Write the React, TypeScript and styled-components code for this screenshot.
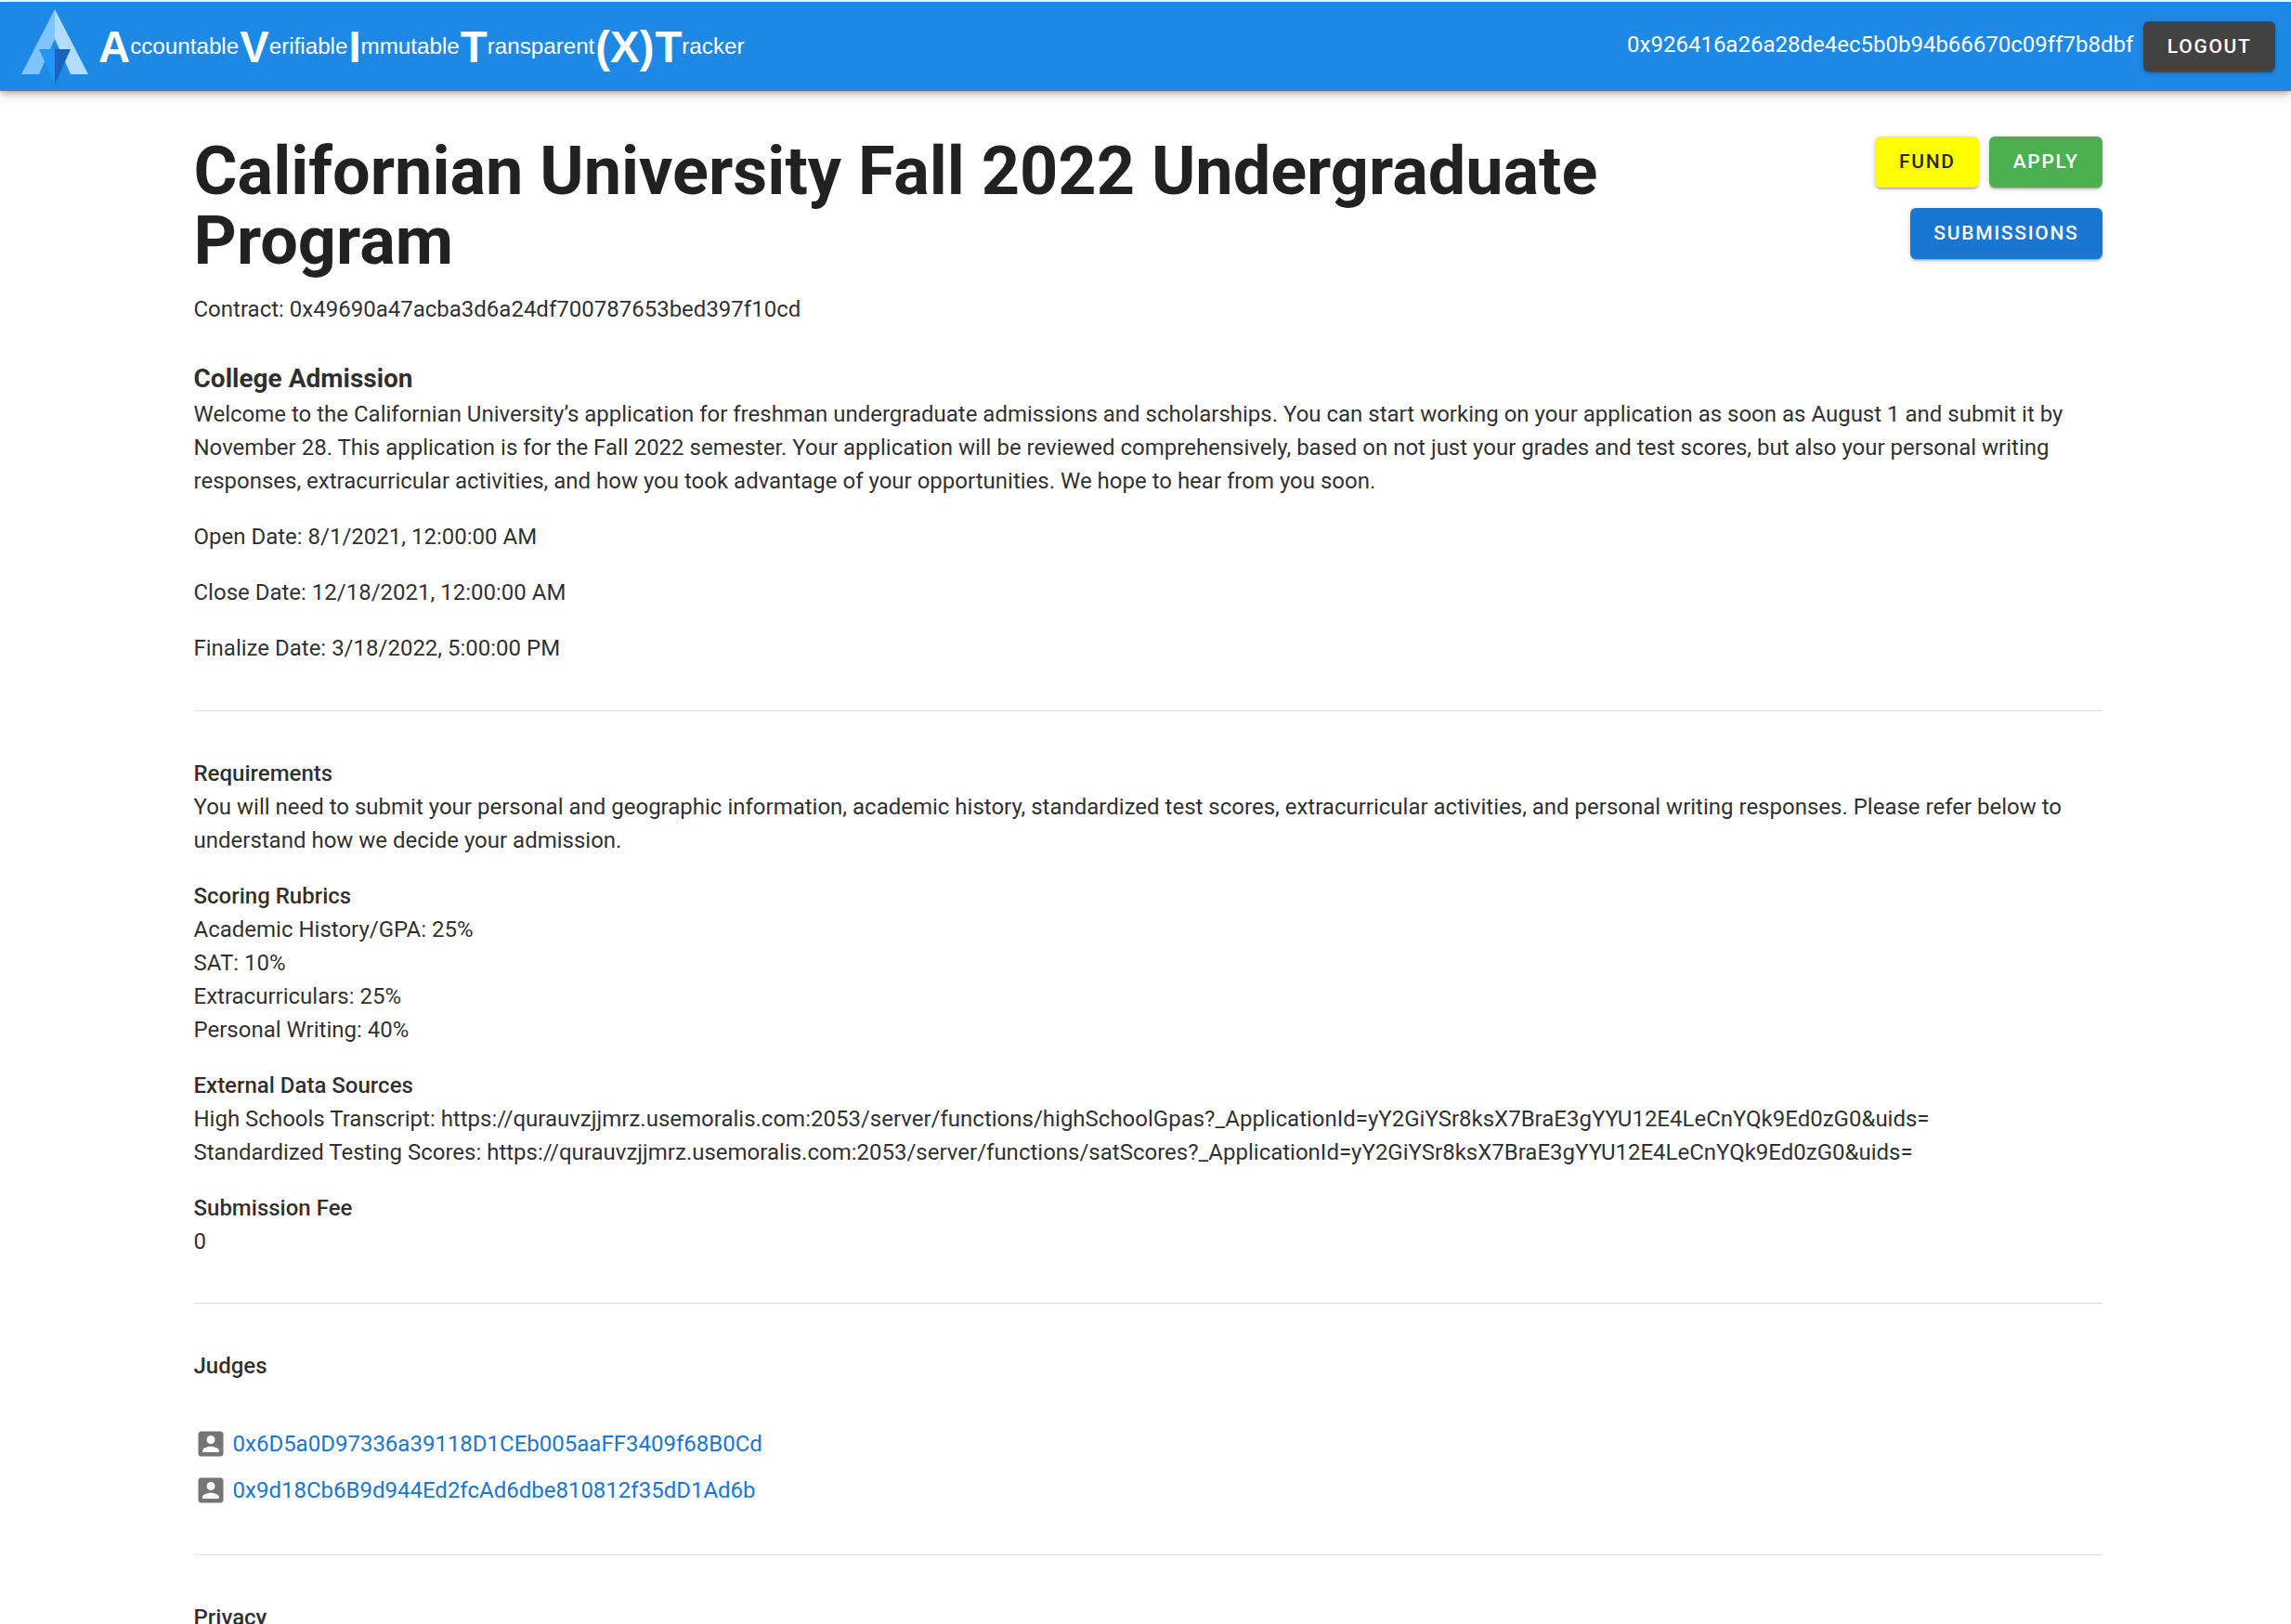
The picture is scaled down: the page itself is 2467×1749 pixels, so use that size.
import styled, { createGlobalStyle } from 'styled-components';

const logoWords = [
  ['A', 'ccountable'],
  ['V', 'erifiable'],
  ['I', 'mmutable'],
  ['T', 'ransparent'],
  ['(X)', ''],
  ['T', 'racker'],
];

const judges = [
  '0x6D5a0D97336a39118D1CEb005aaFF3409f68B0Cd',
  '0x9d18Cb6B9d944Ed2fcAd6dbe810812f35dD1Ad6b',
];

const App = () => {
  return (
    <Page>
      <GlobalStyle />
      <AppBar>
        <Brand>
          <svg width='72' height='81' viewBox='23 9 72 81'>
            <polygon points='59,9 59,41 42,79 23,79' fill='#80c4ff' />
            <polygon points='59,9 59,41 76,79 95,79' fill='#b3ddff' />
            <polygon points='42,52 59,52 59,90' fill='#2196f3' />
            <polygon points='76,52 59,52 59,90' fill='#1a62bf' />
          </svg>
          <LogoText>
            {logoWords.map(([initial, rest], index) => (
              <LogoWord key={index}>
                <Initial>{initial}</Initial>
                {rest}
              </LogoWord>
            ))}
          </LogoText>
        </Brand>
        <Account>
          <Wallet>0x926416a26a28de4ec5b0b94b66670c09ff7b8dbf</Wallet>
          <Button bg='#424242' color='#fff'>
            Logout
          </Button>
        </Account>
      </AppBar>

      <Main>
        <Header>
          <Title>Californian University Fall 2022 Undergraduate Program</Title>
          <Actions>
            <ActionRow>
              <Button bg='#ffff00' color='rgba(0, 0, 0, 0.87)'>
                Fund
              </Button>
              <Button bg='#4caf50' color='#fff'>
                Apply
              </Button>
            </ActionRow>
            <ActionRow>
              <Button bg='#1976d2' color='#fff'>
                Submissions
              </Button>
            </ActionRow>
          </Actions>
        </Header>
        <Contract>Contract: 0x49690a47acba3d6a24df700787653bed397f10cd</Contract>

        <Heading>College Admission</Heading>
        <Paragraph>
          Welcome to the Californian University’s application for freshman
          undergraduate admissions and scholarships. You can start working on
          your application as soon as August 1 and submit it by November 28.
          This application is for the Fall 2022 semester. Your application will
          be reviewed comprehensively, based on not just your grades and test
          scores, but also your personal writing responses, extracurricular
          activities, and how you took advantage of your opportunities. We hope
          to hear from you soon.
        </Paragraph>
        <Paragraph>Open Date: 8/1/2021, 12:00:00 AM</Paragraph>
        <Paragraph>Close Date: 12/18/2021, 12:00:00 AM</Paragraph>
        <Paragraph>Finalize Date: 3/18/2022, 5:00:00 PM</Paragraph>

        <Divider gap={49} />

        <Section>
          <Label>Requirements</Label>
          <Paragraph>
            You will need to submit your personal and geographic information,
            academic history, standardized test scores, extracurricular
            activities, and personal writing responses. Please refer below to
            understand how we decide your admission.
          </Paragraph>
          <Label>Scoring Rubrics</Label>
          <Paragraph>
            Academic History/GPA: 25%
            <br />
            SAT: 10%
            <br />
            Extracurriculars: 25%
            <br />
            Personal Writing: 40%
          </Paragraph>
          <Label>External Data Sources</Label>
          <Paragraph>
            High Schools Transcript:
            https://qurauvzjjmrz.usemoralis.com:2053/server/functions/highSchoolGpas?_ApplicationId=yY2GiYSr8ksX7BraE3gYYU12E4LeCnYQk9Ed0zG0&uids=
            <br />
            Standardized Testing Scores:
            https://qurauvzjjmrz.usemoralis.com:2053/server/functions/satScores?_ApplicationId=yY2GiYSr8ksX7BraE3gYYU12E4LeCnYQk9Ed0zG0&uids=
          </Paragraph>
          <Label>Submission Fee</Label>
          <Paragraph>0</Paragraph>
        </Section>

        <Divider gap={48} />

        <Section>
          <JudgesLabel>Judges</JudgesLabel>
          {judges.map((judge) => (
            <JudgeRow key={judge}>
              <svg width='36' height='36' viewBox='0 0 24 24' fill='#757575'>
                <path d='M3 5v14c0 1.1.89 2 2 2h14c1.1 0 2-.9 2-2V5c0-1.1-.9-2-2-2H5c-1.11 0-2 .9-2 2zm12 4c0 1.66-1.34 3-3 3s-3-1.34-3-3 1.34-3 3-3 3 1.34 3 3zm-9 8c0-2 4-3.1 6-3.1s6 1.1 6 3.1v1H6v-1z' />
              </svg>
              <JudgeLink>{judge}</JudgeLink>
            </JudgeRow>
          ))}
        </Section>

        <Divider gap={44} />

        <Section>
          <Label>Privacy</Label>
        </Section>
      </Main>
    </Page>
  );
};

export default App;

const GlobalStyle = createGlobalStyle`
  html, body {
    margin: 0;
    padding: 0;
    background: #fff;
  }
`;

const Page = styled.div`
  height: 1749px;
  overflow: hidden;
  padding-top: 2px;
  box-sizing: border-box;
  font-family: Roboto, sans-serif;
  font-size: 24px;
  line-height: 36px;
  color: rgba(0, 0, 0, 0.84);
`;

const AppBar = styled.header`
  height: 96px;
  box-sizing: border-box;
  padding: 0 17px 0 23px;
  display: flex;
  align-items: center;
  justify-content: space-between;
  background: #1e88e5;
  box-shadow: 0 3px 6px -1px rgba(0, 0, 0, 0.3), 0 6px 12px rgba(0, 0, 0, 0.1);
`;

const Brand = styled.div`
  display: flex;
  align-items: center;
  gap: 11px;
`;

const LogoText = styled.div`
  display: flex;
  gap: 1px;
`;

const LogoWord = styled.span`
  display: flex;
  align-items: center;
  font: 24.2px 'Liberation Sans', Arial, sans-serif;
  color: #fff;
`;

const Initial = styled.span`
  font-size: 47.3px;
  font-weight: 700;
`;

const Account = styled.div`
  display: flex;
  align-items: center;
  gap: 11px;
`;

const Wallet = styled.span`
  color: #fff;
  position: relative;
  top: -2px;
`;

const Button = styled.button<{ bg: string; color: string }>`
  padding: 9px 25.5px;
  border: 0;
  border-radius: 6px;
  background: ${({ bg }) => bg};
  color: ${({ color }) => color};
  font: 500 21px/36.75px Roboto, sans-serif;
  letter-spacing: 1.7px;
  text-transform: uppercase;
  box-shadow: 0 3px 2px -2px rgba(0, 0, 0, 0.2), 0 2px 3px rgba(0, 0, 0, 0.14),
    0 1px 6px rgba(0, 0, 0, 0.12);
`;

const Main = styled.main`
  width: 2055.5px;
  margin-left: 208.5px;
  padding-top: 49px;
`;

const Header = styled.div`
  display: flex;
  justify-content: space-between;
  align-items: flex-start;
`;

const Title = styled.h1`
  width: 1600px;
  margin: 0;
  font-size: 72px;
  font-weight: 700;
  line-height: 75px;
  color: rgba(0, 0, 0, 0.87);
`;

const Actions = styled.div`
  display: flex;
  flex-direction: column;
  gap: 22px;
`;

const ActionRow = styled.div`
  display: flex;
  justify-content: flex-end;
  gap: 11px;
`;

const Contract = styled.p`
  margin: 18px 0 0;
`;

const Heading = styled.h2`
  margin: 39px 0 2px;
  font-size: 28px;
  font-weight: 700;
  line-height: 36px;
`;

const Paragraph = styled.p`
  margin: 0 0 24px;
`;

const Divider = styled.hr<{ gap: number }>`
  margin: ${({ gap }) => gap}px 0 0;
  border: 0;
  border-top: 1.5px solid rgba(0, 0, 0, 0.12);
`;

const Section = styled.section`
  padding-top: 49px;
  & > p:last-child {
    margin-bottom: 0;
  }
`;

const Label = styled.div`
  font-weight: 500;
`;

const JudgesLabel = styled(Label)`
  margin-bottom: 41px;
`;

const JudgeRow = styled.div`
  display: flex;
  align-items: center;
  gap: 6px;
  height: 50px;
`;

const JudgeLink = styled.a`
  color: #1976d2;
`;
